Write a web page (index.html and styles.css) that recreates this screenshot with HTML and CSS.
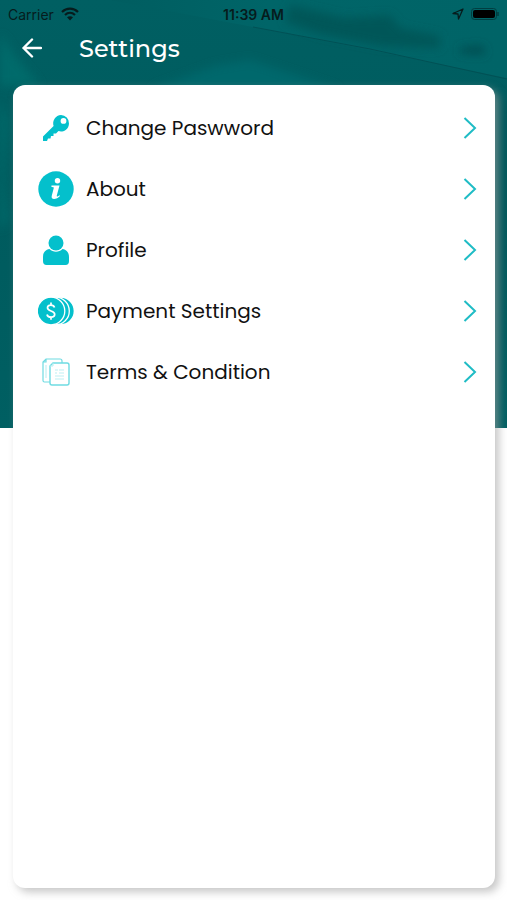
FILE: index.html
```html
<!DOCTYPE html>
<html lang="en">

<head>
  <meta charset="UTF-8" />
  <meta name="viewport" content="width=device-width, initial-scale=1.0" />
  <title>Settings</title>
  <link rel="stylesheet" href="styles.css">
</head>

<body>
  <!-- teal backdrop -->
  <svg class="backdrop" viewBox="0 0 507 428" preserveAspectRatio="none" aria-hidden="true">
    <defs>
      <filter id="soft" x="-20%" y="-20%" width="140%" height="140%">
        <feGaussianBlur stdDeviation="5" />
      </filter>
      <linearGradient id="teal" x1="0" y1="0" x2="0" y2="1">
        <stop offset="0" stop-color="#005f62" />
        <stop offset="0.5" stop-color="#005b5e" />
        <stop offset="1" stop-color="#005f62" />
      </linearGradient>
      <linearGradient id="light" x1="0" y1="0" x2="1" y2="0">
        <stop offset="0" stop-color="#005d60" />
        <stop offset="0.4" stop-color="#006568" />
        <stop offset="1" stop-color="#006467" />
      </linearGradient>
    </defs>
    <rect width="507" height="428" fill="url(#teal)" />
    <path d="M110 0H507V78L370 50L253 27z" fill="url(#light)" />
    <g filter="url(#soft)">
      <path d="M0 34L15 56L40 86H0z" fill="#006a6b" />
      <path d="M150 90L215 66L250 60L340 90z" fill="#00686c" />
      <path d="M290 5L345 18L390 15L400 28L440 36L440 48L380 46L320 34L285 22z" fill="#005659" />
      <path d="M460 48L482 46L486 54L460 53z" fill="#00494d" />
      <path d="M0 100L8 120L4 180L8 220L0 230z" fill="#006a6b" />
      <path d="M499 90L507 110V220L500 428z" fill="#005458" />
    </g>
    <path d="M253 27L370 49L507 79" fill="none" stroke="#005155" stroke-width="1" />
  </svg>

  <div class="status">
    <div class="status-left">
      <span>Carrier</span>
      <svg width="18" height="14" viewBox="0 0 18 14" aria-hidden="true">
        <path d="M1 5C5.500 .6 12.500 .6 17 5M4 8C7 5.200 11 5.200 14 8" fill="none" stroke="#061c1d" stroke-width="2.200" />
        <path d="M9 13.500L6 10.300C7.800 8.800 10.200 8.800 12 10.300z" fill="#061c1d" />
      </svg>
    </div>
    <span class="time">11:39 AM</span>
    <div class="status-right">
      <svg width="12" height="12" viewBox="0 0 12 12" aria-hidden="true">
        <path d="M11 1L1 5.500L6 6L6.500 11z" fill="none" stroke="#061c1d" stroke-width="1.300" stroke-linejoin="round" />
      </svg>
      <svg width="28" height="12" viewBox="0 0 28 12" aria-hidden="true">
        <rect x=".5" y=".5" width="25" height="11" rx="3" fill="none" stroke="#003e41" />
        <rect x="2" y="2" width="22" height="8" rx="2" fill="#000" />
        <path d="M27 4V8" stroke="#003e41" stroke-width="1.500" />
      </svg>
    </div>
  </div>

  <header class="header">
    <button class="back" aria-label="Back">
      <svg width="20" height="20" viewBox="0 0 20 20" aria-hidden="true">
        <path d="M19 10H1.500M10 1.500L1.500 10L10 18.500" fill="none" stroke="#fff" stroke-width="2.400" stroke-linecap="round" stroke-linejoin="round" />
      </svg>
    </button>
    <h1>Settings</h1>
  </header>

  <main class="card">
    <ul class="menu">
      <li>
        <a href="#password">
          <svg class="icon" viewBox="0 0 36 36" aria-hidden="true">
            <path fill-rule="evenodd" d="M23 5a8.300 8.300 0 0 1 8 8.500 8 8 0 0 1-10.500 7.600L18 23.500h-2.500V26H13l-.5 2.500H10L9 31H5v-4.500L15.600 16A8.300 8.300 0 0 1 23 5zM25.500 8a2.900 2.900 0 1 0 0 5.800 2.900 2.900 0 0 0 0-5.800z" fill="#04c0cc" />
          </svg>
          <span>Change Paswword</span>
          <svg class="arrow" viewBox="0 0 14 24" aria-hidden="true"><path d="M1.500 2L12 12L1.500 22" /></svg>
        </a>
      </li>
      <li>
        <a href="#about">
          <svg class="icon" viewBox="0 0 36 36" aria-hidden="true">
            <circle cx="18" cy="18" r="17.700" fill="#04c0cc" />
            <circle cx="19.500" cy="9.700" r="2.700" fill="#fff" />
            <path d="M13.500 14.500H21.500L18.800 24.500C18.500 26 19.300 26 21.500 24.200L22 25C19 28.500 12.700 29.500 13.700 25L15.900 16.500L13.300 15.800z" fill="#fff" />
          </svg>
          <span>About</span>
          <svg class="arrow" viewBox="0 0 14 24" aria-hidden="true"><path d="M1.500 2L12 12L1.500 22" /></svg>
        </a>
      </li>
      <li>
        <a href="#profile">
          <svg class="icon" viewBox="0 0 36 36" aria-hidden="true">
            <circle cx="18" cy="11" r="7.500" fill="#04c0cc" />
            <path d="M11.500 17C15 20.500 21 20.500 24.500 17C28.500 17.500 31 20.500 31 25V29Q31 33 27.500 33H8.500Q5 33 5 29V25C5 20.500 7.500 17.500 11.500 17z" fill="#04c0cc" />
          </svg>
          <span>Profile</span>
          <svg class="arrow" viewBox="0 0 14 24" aria-hidden="true"><path d="M1.500 2L12 12L1.500 22" /></svg>
        </a>
      </li>
      <li>
        <a href="#payment">
          <svg class="icon" viewBox="0 0 36 36" aria-hidden="true">
            <!-- three stacked coins, front one last -->
            <g fill="#04c0cc" stroke="#fff" stroke-width="1.300">
              <circle cx="22.500" cy="18" r="13.800" />
              <circle cx="17.500" cy="18" r="13.800" />
              <circle cx="13" cy="18" r="13.800" />
            </g>
            <path d="M16.500 14.500C15.700 11.200 9.500 11.200 9.500 14.800C9.500 18.700 16.700 17.300 16.700 21.300C16.700 25.200 9.700 25 9 21.500M13 9.500V12M13 24.300V26.800" fill="none" stroke="#fff" stroke-width="1.700" />
          </svg>
          <span>Payment Settings</span>
          <svg class="arrow" viewBox="0 0 14 24" aria-hidden="true"><path d="M1.500 2L12 12L1.500 22" /></svg>
        </a>
      </li>
      <li>
        <a href="#terms">
          <svg class="icon" viewBox="0 0 36 36" aria-hidden="true">
            <path d="M12 28H6.500Q5 28 5 26.500V8L8 5H22Q24 5 24 7V9M5 8H8V5" fill="none" stroke="#6fdbe2" stroke-width="1.200" />
            <path d="M12 12L15 9H29Q31 9 31 11V29Q31 31 29 31H14Q12 31 12 29z" fill="#fff" stroke="#6fdbe2" stroke-width="1.400" />
            <path d="M12 12H15V9M8 24V11" fill="none" stroke="#b5eef1" />
            <path d="M17 16H20M21 16H26M17 19H19M21 19H26M17 22H26M17 25H26" stroke="#bdf0f3" stroke-width="1.200" />
          </svg>
          <span>Terms &amp; Condition</span>
          <svg class="arrow" viewBox="0 0 14 24" aria-hidden="true"><path d="M1.500 2L12 12L1.500 22" /></svg>
        </a>
      </li>
    </ul>
  </main>
</body>

</html>
```
FILE: styles.css
```css
* {
  margin: 0;
  padding: 0;
  box-sizing: border-box;
}

body {
  position: relative;
  display: flex;
  flex-direction: column;
  min-height: 100vh;
  background: #fff;
  font-family: Poppins, Inter, sans-serif;
}

ul {
  list-style: none;
}

svg {
  display: block;
}

.backdrop {
  position: absolute;
  top: 0;
  left: 0;
  z-index: -1;
  width: 100%;
  height: 428px;
}

/* status bar */
.status {
  display: grid;
  grid-template-columns: 1fr auto 1fr;
  align-items: center;
  height: 28px;
  padding: 0 8px;
  color: #061c1d;
  font-family: Inter, sans-serif;
  font-size: 14px;
}

.status-left,
.status-right {
  display: flex;
  align-items: center;
  gap: 7px;
}

.status-right {
  justify-content: flex-end;
}

.time {
  font-weight: 600;
}

/* title row */
.header {
  display: flex;
  align-items: center;
  gap: 37px;
  height: 40px;
  padding-left: 22px;
  color: #fff;
}

.back {
  border: none;
  background: none;
  cursor: pointer;
}

.header h1 {
  font-family: Montserrat, Inter, sans-serif;
  font-size: 24px;
  font-weight: 500;
}

/* white card */
.card {
  flex: 1;
  margin: 17px 12px 12px 13px;
  padding-top: 12px;
  border-radius: 12px;
  background: #fff;
  box-shadow: 4px 4px 8px rgba(160, 160, 160, 0.6);
}

.menu a {
  display: flex;
  align-items: center;
  height: 61px;
  padding: 0 18px 0 25px;
  color: #111;
  font-size: 20px;
  text-decoration: none;
}

.menu span {
  flex: 1;
  margin-left: 12px;
}

.icon {
  width: 36px;
  height: 36px;
}

.arrow {
  width: 14px;
  height: 24px;
  fill: none;
  stroke: #1fbcc5;
  stroke-width: 2;
}
```
